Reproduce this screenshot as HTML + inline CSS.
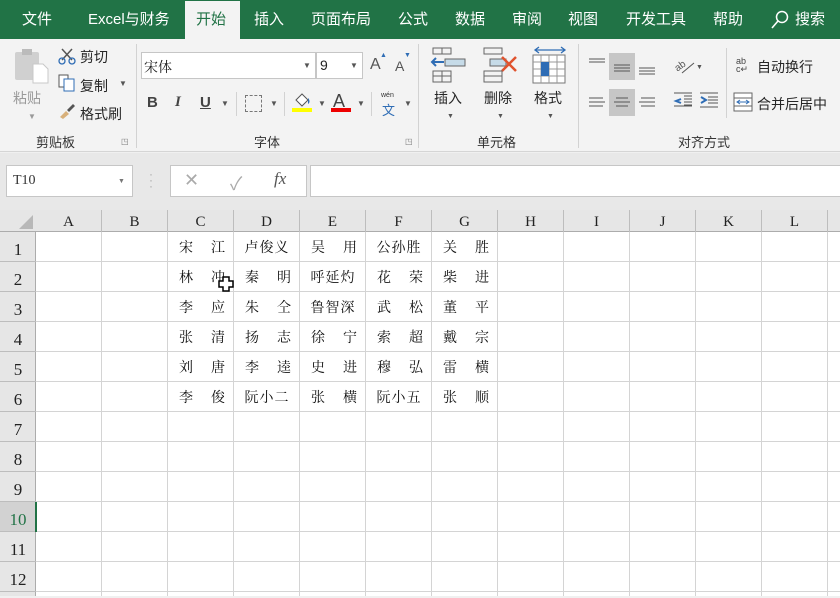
<!DOCTYPE html>
<html><head><meta charset="utf-8"><style>
*{margin:0;padding:0;box-sizing:border-box}
body{width:840px;height:596px;overflow:hidden;background:#f0f0f0;font-family:"Liberation Sans","Noto Sans CJK SC",sans-serif;position:relative}
.a{position:absolute;white-space:nowrap}
.tab{color:#fff;font-size:15px;top:8px}
.rb{font-size:14px;color:#262626}
.gl{font-size:13px;color:#333}
.sep{position:absolute;width:1px;background:#d2d2d2}
.cell{position:absolute;height:30px;width:66px;display:flex;align-items:center;justify-content:space-between;padding:0 9px 0 11px;font-family:"Liberation Serif","Noto Serif CJK SC",serif;font-size:14px;color:#111}
.c3{justify-content:center;padding:0;letter-spacing:1px}
.ch{position:absolute;top:210px;height:22px;width:66px;text-align:center;font-family:"Liberation Serif",serif;font-size:15px;line-height:24px;color:#222;border-right:1px solid #bdbdbd}
.rh{position:absolute;left:0;width:36px;height:30px;text-align:center;font-family:"Liberation Serif",serif;font-size:17px;line-height:36px;color:#222;border-bottom:1px solid #bdbdbd}
</style></head><body>
<div class="a" style="left:0;top:0;width:840px;height:39px;background:#217346"></div>
<div class="a" style="left:185px;top:1px;width:55px;height:38px;background:#f3f3f3"></div>
<span class="a tab" style="left:22px">文件</span>
<span class="a tab" style="left:88px">Excel与财务</span>
<span class="a tab" style="left:196px;color:#217346">开始</span>
<span class="a tab" style="left:254px">插入</span>
<span class="a tab" style="left:311px">页面布局</span>
<span class="a tab" style="left:398px">公式</span>
<span class="a tab" style="left:455px">数据</span>
<span class="a tab" style="left:512px">审阅</span>
<span class="a tab" style="left:568px">视图</span>
<span class="a tab" style="left:626px">开发工具</span>
<span class="a tab" style="left:713px">帮助</span>
<svg class="a" style="left:770px;top:10px" width="20" height="20"><circle cx="12" cy="7" r="5.5" fill="none" stroke="#fff" stroke-width="1.5"/><line x1="8" y1="11" x2="2" y2="18" stroke="#fff" stroke-width="1.6"/></svg>
<span class="a tab" style="left:795px">搜索</span>
<div class="a" style="left:0;top:39px;width:840px;height:113px;background:#f3f3f3;border-bottom:1px solid #d5d5d5"></div>
<div class="sep" style="left:136px;top:44px;height:104px"></div>
<div class="sep" style="left:418px;top:44px;height:104px"></div>
<div class="sep" style="left:578px;top:44px;height:104px"></div>
<svg class="a" style="left:13px;top:46px" width="38" height="38"><rect x="2" y="6" width="24" height="28" rx="2" fill="#d0d0d0"/><rect x="9" y="3" width="10" height="6" fill="#bbb"/><path d="M20 18h10l5 5v14H20z" fill="#fff" stroke="#c8c8c8"/></svg>
<span class="a rb" style="left:13px;top:88px;color:#9a9a9a">粘贴</span>
<span class="a" style="left:28px;top:112px;font-size:8px;color:#999">▼</span>
<svg class="a" style="left:58px;top:47px" width="18" height="18"><path d="M4 2l10 11M14 2L4 13" stroke="#555" stroke-width="1.5"/><circle cx="4" cy="14" r="3" fill="none" stroke="#2f6db5" stroke-width="1.3"/><circle cx="14" cy="14" r="3" fill="none" stroke="#2f6db5" stroke-width="1.3"/></svg>
<span class="a rb" style="left:80px;top:47px">剪切</span>
<svg class="a" style="left:58px;top:74px" width="18" height="18"><rect x="1" y="1" width="9" height="12" fill="#fff" stroke="#555"/><rect x="6" y="5" width="10" height="12" fill="#fff" stroke="#2f6db5"/></svg>
<span class="a rb" style="left:80px;top:76px">复制</span><span class="a" style="left:119px;top:79px;font-size:8px;color:#555">▼</span>
<svg class="a" style="left:58px;top:103px" width="18" height="16"><path d="M2 14l6-6 3 3-6 5z" fill="#d8b07a"/><path d="M9 7l6-6 2 2-6 6z" fill="#555"/></svg>
<span class="a rb" style="left:80px;top:104px">格式刷</span>
<span class="a gl" style="left:36px;top:132px">剪贴板</span>
<span class="a" style="left:121px;top:137px;font-size:8px;color:#777">◳</span>
<div class="a" style="left:141px;top:52px;width:175px;height:27px;background:#fff;border:1px solid #c6c6c6"></div>
<span class="a" style="left:144px;top:57px;font-size:14px;color:#222;font-family:'Noto Serif CJK SC',serif">宋体</span>
<span class="a" style="left:303px;top:61px;font-size:8px;color:#555">▼</span>
<div class="a" style="left:316px;top:52px;width:47px;height:27px;background:#fff;border:1px solid #c6c6c6"></div>
<span class="a" style="left:320px;top:57px;font-size:14px;color:#222">9</span>
<span class="a" style="left:350px;top:61px;font-size:8px;color:#555">▼</span>
<span class="a" style="left:370px;top:56px;font-size:16px;color:#555">A</span><span class="a" style="left:380px;top:52px;font-size:7px;color:#2f6db5">▲</span>
<span class="a" style="left:395px;top:58px;font-size:14px;color:#555">A</span><span class="a" style="left:404px;top:52px;font-size:7px;color:#2f6db5">▼</span>
<span class="a" style="left:147px;top:94px;font-size:15px;font-weight:bold;color:#444">B</span>
<span class="a" style="left:175px;top:94px;font-size:15px;font-style:italic;font-weight:bold;color:#444;font-family:'Liberation Serif',serif">I</span>
<span class="a" style="left:200px;top:94px;font-size:15px;font-weight:bold;text-decoration:underline;color:#444">U</span>
<span class="a" style="left:221px;top:99px;font-size:8px;color:#555">▼</span>
<div class="sep" style="left:236px;top:92px;height:24px"></div>
<div class="a" style="left:245px;top:95px;width:17px;height:17px;border:1px dashed #777"></div>
<span class="a" style="left:270px;top:99px;font-size:8px;color:#555">▼</span>
<div class="sep" style="left:284px;top:92px;height:24px"></div>
<svg class="a" style="left:292px;top:92px" width="20" height="16"><path d="M4 8l6-6 6 6-6 6z" fill="#fff" stroke="#555"/><path d="M16 6c2 2 2 5 0 6" fill="#2f6db5"/></svg>
<div class="a" style="left:292px;top:108px;width:20px;height:4px;background:#ffff00"></div>
<span class="a" style="left:318px;top:99px;font-size:8px;color:#555">▼</span>
<span class="a" style="left:333px;top:91px;font-size:18px;color:#444">A</span>
<div class="a" style="left:331px;top:108px;width:20px;height:4px;background:#e00"></div>
<span class="a" style="left:357px;top:99px;font-size:8px;color:#555">▼</span>
<div class="sep" style="left:371px;top:92px;height:24px"></div>
<span class="a" style="left:381px;top:92px;font-size:7px;color:#333">wén</span>
<span class="a" style="left:382px;top:100px;font-size:13px;color:#2f6db5">文</span>
<span class="a" style="left:404px;top:99px;font-size:8px;color:#555">▼</span>
<span class="a gl" style="left:254px;top:132px">字体</span>
<span class="a" style="left:405px;top:137px;font-size:8px;color:#777">◳</span>
<svg class="a" style="left:430px;top:47px" width="36" height="36"><rect x="3" y="1" width="18" height="6" fill="none" stroke="#666"/><line x1="12" y1="1" x2="12" y2="7" stroke="#666"/><rect x="15" y="12" width="20" height="7" fill="#c6dbe8" stroke="#666"/><path d="M2 15h12M6 11l-4 4 4 4" stroke="#2f6db5" stroke-width="2" fill="none"/><rect x="3" y="24" width="18" height="11" fill="none" stroke="#666"/><line x1="3" y1="29" x2="21" y2="29" stroke="#666"/><line x1="12" y1="24" x2="12" y2="35" stroke="#666"/></svg>
<span class="a rb" style="left:434px;top:88px">插入</span><span class="a" style="left:447px;top:113px;font-size:7px;color:#555">▼</span>
<svg class="a" style="left:482px;top:47px" width="38" height="36"><rect x="2" y="1" width="18" height="6" fill="none" stroke="#666"/><rect x="8" y="12" width="16" height="7" fill="#c6dbe8" stroke="#666"/><path d="M20 10l14 14M34 10L20 24" stroke="#e0532e" stroke-width="2.5"/><rect x="2" y="24" width="18" height="11" fill="none" stroke="#666"/><line x1="2" y1="29" x2="20" y2="29" stroke="#666"/></svg>
<span class="a rb" style="left:484px;top:88px">删除</span><span class="a" style="left:497px;top:113px;font-size:7px;color:#555">▼</span>
<svg class="a" style="left:531px;top:45px" width="36" height="40"><path d="M4 5h30M8 2l-4 3 4 3M30 2l4 3-4 3" stroke="#2f6db5" fill="none" stroke-width="1.3"/><rect x="2" y="10" width="32" height="28" fill="#fff" stroke="#777"/><path d="M2 17h32M2 24h32M2 31h32M10 10v28M18 10v28M26 10v28" stroke="#999"/><rect x="10" y="17" width="8" height="14" fill="#2f6db5"/></svg>
<span class="a rb" style="left:534px;top:88px">格式</span><span class="a" style="left:547px;top:113px;font-size:7px;color:#555">▼</span>
<span class="a gl" style="left:477px;top:132px">单元格</span>
<div class="a" style="left:609px;top:53px;width:26px;height:27px;background:#c6c6c6"></div>
<div class="a" style="left:609px;top:89px;width:26px;height:27px;background:#c6c6c6"></div>
<svg class="a" style="left:586px;top:55px" width="76" height="60"><g stroke="#555"><path d="M3 4h16M3 7h16M28 10h16M28 13h16M28 16h16M53 13h16M53 16h16M53 19h16"/><path d="M3 43h14M3 47h16M3 51h14M30 43h12M28 47h16M30 51h12M55 43h14M53 47h16M55 51h14"/></g></svg>
<svg class="a" style="left:672px;top:55px" width="36" height="60"><text x="2" y="14" font-size="10" fill="#555" transform="rotate(-35 8 10)" font-family="Liberation Sans">ab</text><path d="M10 18l12-10" stroke="#555"/><text x="24" y="14" font-size="7" fill="#555">▼</text><g stroke="#555"><path d="M12 41h8M12 44h8M12 47h8M12 50h8M2 51h18"/><path d="M2 38h18"/></g><path d="M9 44l-5 2 5 2" stroke="#2f6db5" stroke-width="2" fill="none"/></svg>
<svg class="a" style="left:698px;top:91px" width="22" height="20"><g stroke="#555"><path d="M2 2h18M10 6h10M10 9h10M10 12h10M2 16h18"/></g><path d="M3 6l5 3-5 3" stroke="#2f6db5" stroke-width="2" fill="none"/></svg>
<div class="sep" style="left:726px;top:48px;height:70px"></div>
<span class="a" style="left:736px;top:57px;font-size:9px;color:#444;line-height:8px">ab<br>c↵</span>
<span class="a rb" style="left:757px;top:57px">自动换行</span>
<svg class="a" style="left:733px;top:92px" width="20" height="20"><rect x="1" y="1" width="18" height="18" fill="#fff" stroke="#666"/><path d="M1 6h18M1 14h18" stroke="#666"/><path d="M4 10h12M7 8l-3 2 3 2M13 8l3 2-3 2" stroke="#2f6db5" fill="none"/></svg>
<span class="a rb" style="left:757px;top:94px">合并后居中</span>
<span class="a gl" style="left:678px;top:132px">对齐方式</span>
<div class="a" style="left:0;top:153px;width:840px;height:57px;background:#e8e8e8"></div>
<div class="a" style="left:6px;top:165px;width:127px;height:32px;background:#fff;border:1px solid #c6c6c6"></div>
<span class="a" style="left:13px;top:173px;font-size:14px;color:#333;font-family:'Liberation Serif',serif">T10</span>
<span class="a" style="left:118px;top:178px;font-size:7px;color:#777">▼</span>
<span class="a" style="left:149px;top:171px;font-size:12px;color:#aaa;line-height:6px">·<br>·<br>·</span>
<div class="a" style="left:170px;top:165px;width:137px;height:32px;background:#fff;border:1px solid #c6c6c6"></div>
<span class="a" style="left:184px;top:170px;font-size:18px;color:#aaa">✕</span>
<span class="a" style="left:230px;top:170px;font-size:18px;color:#aaa">✓</span>
<span class="a" style="left:274px;top:169px;font-size:17px;color:#555;font-style:italic;font-family:'Liberation Serif',serif">fx</span>
<div class="a" style="left:310px;top:165px;width:540px;height:32px;background:#fff;border:1px solid #c6c6c6"></div>
<div class="a" style="left:0;top:210px;width:840px;height:22px;background:#e6e6e6;border-bottom:1px solid #acacac"></div>
<svg class="a" style="left:18px;top:214px" width="16" height="16"><path d="M15 1v14H1z" fill="#b8b8b8"/></svg>
<div class="a" style="left:36px;top:232px;width:804px;height:364px;background:#fff;background-image:repeating-linear-gradient(90deg,transparent 0 65px,#d4d4d4 65px 66px),repeating-linear-gradient(180deg,transparent 0 29px,#d4d4d4 29px 30px)"></div>
<div class="a" style="left:0;top:232px;width:36px;height:364px;background:#e6e6e6;border-right:1px solid #acacac"></div>
<div class="ch" style="left:36px">A</div><div class="ch" style="left:102px">B</div><div class="ch" style="left:168px">C</div><div class="ch" style="left:234px">D</div><div class="ch" style="left:300px">E</div><div class="ch" style="left:366px">F</div><div class="ch" style="left:432px">G</div><div class="ch" style="left:498px">H</div><div class="ch" style="left:564px">I</div><div class="ch" style="left:630px">J</div><div class="ch" style="left:696px">K</div><div class="ch" style="left:762px">L</div>
<div class="rh" style="top:232px">1</div><div class="rh" style="top:262px">2</div><div class="rh" style="top:292px">3</div><div class="rh" style="top:322px">4</div><div class="rh" style="top:352px">5</div><div class="rh" style="top:382px">6</div><div class="rh" style="top:412px">7</div><div class="rh" style="top:442px">8</div><div class="rh" style="top:472px">9</div><div class="rh" style="top:502px;background:#d2d2d2;color:#217346">10</div><div class="rh" style="top:532px">11</div><div class="rh" style="top:562px">12</div>
<div class="a" style="left:35px;top:502px;width:2px;height:30px;background:#217346"></div>
<div class="cell" style="left:168px;top:232px"><span>宋</span><span>江</span></div>
<div class="cell" style="left:168px;top:262px"><span>林</span><span>冲</span></div>
<div class="cell" style="left:168px;top:292px"><span>李</span><span>应</span></div>
<div class="cell" style="left:168px;top:322px"><span>张</span><span>清</span></div>
<div class="cell" style="left:168px;top:352px"><span>刘</span><span>唐</span></div>
<div class="cell" style="left:168px;top:382px"><span>李</span><span>俊</span></div>
<div class="cell c3" style="left:234px;top:232px">卢俊义</div>
<div class="cell" style="left:234px;top:262px"><span>秦</span><span>明</span></div>
<div class="cell" style="left:234px;top:292px"><span>朱</span><span>仝</span></div>
<div class="cell" style="left:234px;top:322px"><span>扬</span><span>志</span></div>
<div class="cell" style="left:234px;top:352px"><span>李</span><span>逵</span></div>
<div class="cell c3" style="left:234px;top:382px">阮小二</div>
<div class="cell" style="left:300px;top:232px"><span>吴</span><span>用</span></div>
<div class="cell c3" style="left:300px;top:262px">呼延灼</div>
<div class="cell c3" style="left:300px;top:292px">鲁智深</div>
<div class="cell" style="left:300px;top:322px"><span>徐</span><span>宁</span></div>
<div class="cell" style="left:300px;top:352px"><span>史</span><span>进</span></div>
<div class="cell" style="left:300px;top:382px"><span>张</span><span>横</span></div>
<div class="cell c3" style="left:366px;top:232px">公孙胜</div>
<div class="cell" style="left:366px;top:262px"><span>花</span><span>荣</span></div>
<div class="cell" style="left:366px;top:292px"><span>武</span><span>松</span></div>
<div class="cell" style="left:366px;top:322px"><span>索</span><span>超</span></div>
<div class="cell" style="left:366px;top:352px"><span>穆</span><span>弘</span></div>
<div class="cell c3" style="left:366px;top:382px">阮小五</div>
<div class="cell" style="left:432px;top:232px"><span>关</span><span>胜</span></div>
<div class="cell" style="left:432px;top:262px"><span>柴</span><span>进</span></div>
<div class="cell" style="left:432px;top:292px"><span>董</span><span>平</span></div>
<div class="cell" style="left:432px;top:322px"><span>戴</span><span>宗</span></div>
<div class="cell" style="left:432px;top:352px"><span>雷</span><span>横</span></div>
<div class="cell" style="left:432px;top:382px"><span>张</span><span>顺</span></div>
<svg class="a" style="left:218px;top:276px" width="18" height="18"><path d="M5 1h6v4h4v6h-4v4H5v-4H1V5h4z" fill="#fff" stroke="#000" stroke-width="1.5"/></svg>
</body></html>
